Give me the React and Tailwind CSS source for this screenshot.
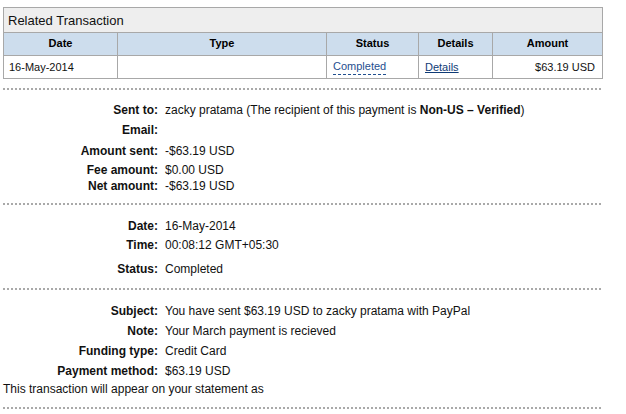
import React from "react";

function Dots({ className = "" }) {
  return (
    <div
      className={`ml-[3px] w-[600px] h-[2px] bg-[repeating-linear-gradient(to_right,#a9a9a9_0px,#a9a9a9_2px,transparent_2px,transparent_4px)] ${className}`}
    />
  );
}

function Row({ label, children, h }) {
  return (
    <div className={`flex items-center ${h}`}>
      <div className="w-[158px] text-right font-bold text-[#111] whitespace-nowrap">{label}</div>
      <div className="ml-[7px] text-[#111] whitespace-nowrap">{children}</div>
    </div>
  );
}

export default function App() {
  return (
    <div className="w-[626px] h-[414px] bg-white overflow-hidden font-['Liberation_Sans',Arial,sans-serif] text-[12px] leading-[14px] pt-[7px]">
      <div className="ml-[3px] w-[600px] border border-[#a8a8a8] text-[#111]">
        <div className="h-[25px] bg-[#eeeeee] border-b border-[#a8a8a8] pl-[4px] flex items-center text-[13px] leading-[15px]">
          Related Transaction
        </div>
        <div className="flex h-[23px] bg-[#cddded] border-b border-[#a8a8a8] text-[11px] leading-[13px] font-bold text-black">
          <div className="w-[114px] border-r border-[#a8a8a8] flex items-center justify-center pb-[1px]">Date</div>
          <div className="w-[209px] border-r border-[#a8a8a8] flex items-center justify-center pb-[1px]">Type</div>
          <div className="w-[92px] border-r border-[#a8a8a8] flex items-center justify-center pb-[1px]">Status</div>
          <div className="w-[74px] border-r border-[#a8a8a8] flex items-center justify-center pb-[1px]">Details</div>
          <div className="flex-1 flex items-center justify-center pb-[1px]">Amount</div>
        </div>
        <div className="flex h-[22px] text-[11px] leading-[13px]">
          <div className="w-[114px] border-r border-[#a8a8a8] flex items-center pl-[5px]">16-May-2014</div>
          <div className="w-[209px] border-r border-[#a8a8a8]"></div>
          <div className="w-[92px] border-r border-[#a8a8a8] flex items-center pl-[6px]">
            <span className="text-[#1f4f8f] border-b border-dashed border-[#1f4f8f] leading-[13px] pb-[1px] mt-[1px]">Completed</span>
          </div>
          <div className="w-[74px] border-r border-[#a8a8a8] flex items-center pl-[6px]">
            <span className="text-[#0f3b76] underline">Details</span>
          </div>
          <div className="flex-1 flex items-center justify-end pr-[7px]">$63.19 USD</div>
        </div>
      </div>

      <Dots className="mt-[9px]" />

      <div className="pt-[10px]">
        <Row label="Sent to:" h="h-[20px]">
          zacky pratama (The recipient of this payment is <b>Non-US – Verified</b>)
        </Row>
        <Row label="Email:" h="h-[20px]"></Row>
        <Row label="Amount sent:" h="h-[21px]">-$63.19 USD</Row>
        <Row label="Fee amount:" h="h-[17px]">$0.00 USD</Row>
        <Row label="Net amount:" h="h-[15px]">-$63.19 USD</Row>
      </div>

      <Dots className="mt-[10px]" />

      <div className="pt-[11px]">
        <Row label="Date:" h="h-[20px]">16-May-2014</Row>
        <Row label="Time:" h="h-[18px]">00:08:12 GMT+05:30</Row>
        <Row label="Status:" h="h-[30px]">Completed</Row>
      </div>

      <Dots className="mt-[4px]" />

      <div className="pt-[11px]">
        <Row label="Subject:" h="h-[20px]">You have sent $63.19 USD to zacky pratama with PayPal</Row>
        <Row label="Note:" h="h-[19px]">Your March payment is recieved</Row>
        <Row label="Funding type:" h="h-[21px]">Credit Card</Row>
        <Row label="Payment method:" h="h-[19px]">$63.19 USD</Row>
        <div className="h-[18px] flex items-center pl-[3px] text-[#111]">
          This transaction will appear on your statement as
        </div>
      </div>

      <Dots className="mt-[9px]" />
    </div>
  );
}
